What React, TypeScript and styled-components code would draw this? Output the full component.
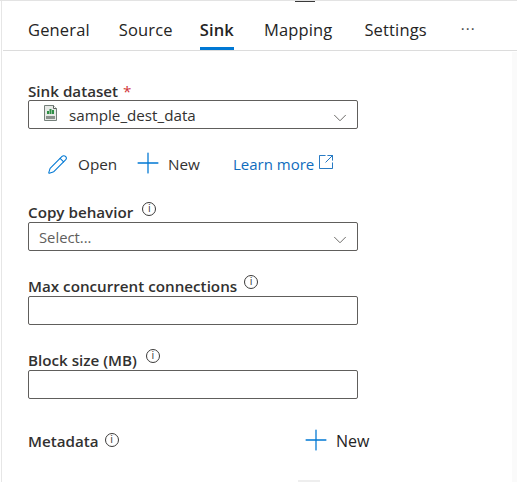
import React from 'react';
import styled, { createGlobalStyle } from 'styled-components';
import { ChevronDown, Plus, Pencil } from 'lucide-react';

const GlobalStyle = createGlobalStyle`
  html, body {
    margin: 0;
    padding: 0;
    background: #fff;
  }
  body {
    font-family: "Open Sans", "Noto Sans", "Liberation Sans", sans-serif;
    color: #242424;
  }
`;

const Page = styled.div`
  position: relative;
  width: 517px;
  height: 482px;
  box-sizing: border-box;
  overflow: hidden;
  background: #fff;
  border-top: 1px solid #e3e3e3;
`;

const TopHandle = styled.div`
  position: absolute;
  top: -1px;
  left: 295px;
  width: 20px;
  height: 2px;
  background: #3a3a3a;
`;

const BottomHandle = styled.div`
  position: absolute;
  bottom: 0;
  left: 298px;
  width: 22px;
  height: 2px;
  background: #eeeeee;
`;

const ScrollTrack = styled.div`
  position: absolute;
  top: 51px;
  right: 0;
  bottom: 0;
  width: 5px;
  background: #fafafa;
`;

const Frame = styled.div`
  margin-left: 1px;
  height: 100%;
  border-left: 1px solid #e6e6e6;
  display: flex;
  flex-direction: column;
`;

const TabBar = styled.div`
  height: 50px;
  box-sizing: border-box;
  margin-left: 1px;
  padding-left: 25px;
  display: flex;
  gap: 29px;
  border-bottom: 1px solid #dcdcdc;
`;

const Tab = styled.div<{ $active?: boolean; $nudge?: number }>`
  height: 49px;
  box-sizing: border-box;
  margin-left: ${(p) => p.$nudge ?? 0}px;
  padding-top: 18px;
  font-size: 16.5px;
  line-height: 22px;
  letter-spacing: 0.15px;
  font-weight: ${(p) => (p.$active ? 600 : 400)};
  color: #242424;
  border-bottom: ${(p) => (p.$active ? '3px solid #0078d4' : 'none')};
`;

const More = styled.div`
  margin-left: 5px;
  padding-top: 18px;
  font-size: 15px;
  line-height: 18px;
  letter-spacing: 1px;
  color: #444;
`;

const Form = styled.div`
  padding: 30px 0 0 26px;
  width: 330px;
  display: flex;
  flex-direction: column;
`;

const Field = styled.div<{ $top: number }>`
  margin-top: ${(p) => p.$top}px;
`;

const Label = styled.div<{ $height?: number }>`
  display: flex;
  align-items: flex-start;
  gap: 6px;
  height: ${(p) => p.$height ?? 20}px;
  font-size: 15.2px;
  line-height: 20px;
  font-weight: 600;
  color: #323130;
`;

const Required = styled.span`
  color: #d13438;
  font-weight: 400;
  margin-left: -1px;
`;

const Info = styled.span<{ $top?: number; $left?: number }>`
  width: 14px;
  height: 14px;
  margin-top: ${(p) => p.$top ?? -1}px;
  margin-left: ${(p) => p.$left ?? 0}px;
  box-sizing: border-box;
  border: 1px solid #3b3a39;
  border-radius: 50%;
  font-size: 10px;
  line-height: 12px;
  font-weight: 400;
  text-align: center;
  font-family: "Liberation Sans", sans-serif;
  color: #3b3a39;
`;

const Box = styled.div`
  width: 330px;
  height: 29px;
  box-sizing: border-box;
  border: 1px solid #605e5c;
  border-radius: 2px;
  display: flex;
  align-items: center;
  overflow: hidden;
  color: #323130;
`;

const SelectText = styled.span<{ $muted?: boolean }>`
  flex: 1;
  margin-left: ${(p) => (p.$muted ? 10 : 12)}px;
  font-size: ${(p) => (p.$muted ? 14.8 : 15.2)}px;
  color: ${(p) => (p.$muted ? '#605e5c' : '#323130')};
`;

const Caret = styled(ChevronDown)`
  width: 22px;
  height: 22px;
  margin: 6px 6px 0 0;
  color: #605e5c;
  stroke-width: 1;
`;

const FileIcon = styled.svg`
  width: 13px;
  height: 16px;
  margin: -3px 0 0 15px;
`;

const Actions = styled.div`
  display: flex;
  align-items: center;
  margin: 20px 0 0 19px;
  height: 30px;
  font-size: 15.3px;
  color: #323130;
`;

const Action = styled.div<{ $gap: number; $width: number }>`
  display: flex;
  flex: none;
  align-items: center;
  gap: ${(p) => p.$gap}px;
  width: ${(p) => p.$width}px;
`;

const ActionText = styled.span`
  margin-top: -1px;
`;

const EditIcon = styled(Pencil)`
  width: 21px;
  height: 21px;
  color: #0078d4;
  stroke-width: 1.2;
`;

const AddIcon = styled(Plus)`
  position: relative;
  top: -1px;
  left: 1px;
  width: 34px;
  height: 34px;
  margin: -4px -7px;
  color: #0078d4;
  stroke-width: 0.9;
`;

const LearnMore = styled.a`
  display: flex;
  align-items: center;
  gap: 5px;
  margin: -1px 0 0 1px;
  font-size: 15px;
  color: #0f6cbd;
`;

const LinkIcon = styled.svg`
  width: 14px;
  height: 14px;
  margin-top: -3px;
`;

const MetadataRow = styled.div`
  display: flex;
  align-items: center;
  margin-top: 30px;
  height: 24px;
`;

const MetadataLabel = styled(Label)`
  flex: none;
  width: 277px;
`;

export default function App() {
  return (
    <>
      <GlobalStyle />
      <Page>
        <TopHandle />
        <ScrollTrack />
        <Frame>
          <TabBar>
            <Tab>General</Tab>
            <Tab>Source</Tab>
            <Tab $active $nudge={-2}>Sink</Tab>
            <Tab $nudge={1}>Mapping</Tab>
            <Tab $nudge={3}>Settings</Tab>
            <More>···</More>
          </TabBar>
          <Form>
            <Field $top={0}>
              <Label $height={19}>
                <span>Sink dataset</span>
                <Required>*</Required>
              </Label>
              <Box>
                <FileIcon viewBox="0 0 13 16">
                  <path d="M.5.5h9l3 3v12H.5z" fill="#e6e9e6" stroke="#75807a" />
                  <path d="M9.500.5v3h3" fill="#fff" stroke="#5a625d" />
                  <rect x="3" y="6" width="2" height="3" fill="#2f8f46" />
                  <rect x="5.500" y="4" width="2" height="5" fill="#2f8f46" />
                  <rect x="8" y="5" width="2" height="4" fill="#2f8f46" />
                  <rect x="2" y="11" width="9" height="3" fill="#8a918c" />
                </FileIcon>
                <SelectText>sample_dest_data</SelectText>
                <Caret />
              </Box>
            </Field>
            <Actions>
              <Action $gap={10} $width={90}>
                <EditIcon />
                <ActionText>Open</ActionText>
              </Action>
              <Action $gap={11} $width={95}>
                <AddIcon />
                <ActionText>New</ActionText>
              </Action>
              <LearnMore>
                Learn more
                <LinkIcon viewBox="0 0 15 15" fill="none" stroke="#0f6cbd">
                  <path d="M7 .5H.5v14h14V8M9 .5h5.500V6M14.500 .5L7 8" />
                </LinkIcon>
              </LearnMore>
            </Actions>
            <Field $top={23}>
              <Label>
                <span>Copy behavior</span>
                <Info $top={0} $left={3}>i</Info>
              </Label>
              <Box>
                <SelectText $muted>Select...</SelectText>
                <Caret />
              </Box>
            </Field>
            <Field $top={25}>
              <Label>
                <span>Max concurrent connections</span>
                <Info $left={1}>i</Info>
              </Label>
              <Box />
            </Field>
            <Field $top={25}>
              <Label>
                <span>Block size (MB)</span>
                <Info $left={3}>i</Info>
              </Label>
              <Box />
            </Field>
            <MetadataRow>
              <MetadataLabel>
                <span>Metadata</span>
                <Info $top={2}>i</Info>
              </MetadataLabel>
              <Action $gap={11} $width={80}>
                <AddIcon />
                <ActionText>New</ActionText>
              </Action>
            </MetadataRow>
          </Form>
        </Frame>
        <BottomHandle />
      </Page>
    </>
  );
}
